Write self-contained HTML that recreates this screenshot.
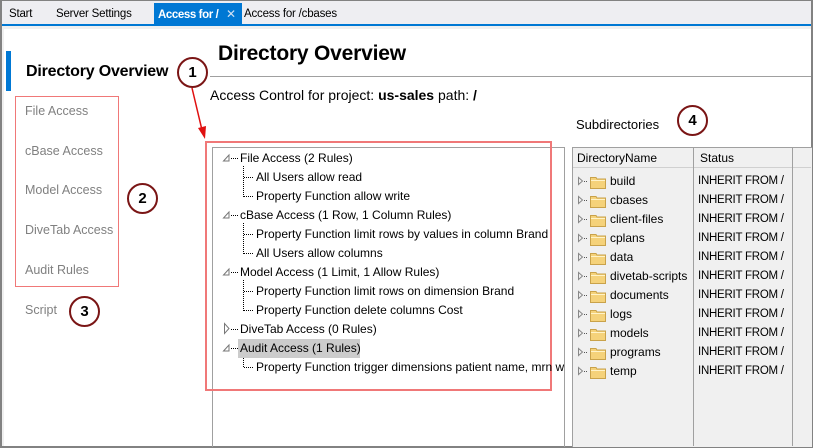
<!DOCTYPE html>
<html><head><meta charset="utf-8"><style>
*{margin:0;padding:0;box-sizing:border-box}
body{width:813px;height:448px;overflow:hidden;background:#fff;font-family:"Liberation Sans",sans-serif;position:relative}
.a{position:absolute;white-space:nowrap}
.tab{top:8px;font-size:11.5px;color:#000;letter-spacing:-0.2px}
.nav{font-size:12.5px;color:#808080;left:25px}
.t{font-size:12px;color:#000;line-height:19px;height:19px}
.c{position:absolute;border:2px solid #7a1515;border-radius:50%;background:#fff;font-weight:bold;font-size:15px;text-align:center;color:#000}
.dr{font-size:12px;line-height:19px}
.st{font-size:11.5px;letter-spacing:-0.25px}
</style></head><body>
<div class="a" style="left:0;top:0;width:813px;height:448px;border:2px solid #828282;border-top-width:1px"></div>
<div class="a" style="left:2px;top:1px;width:809px;height:23px;background:#eeeef2"></div>
<div class="a" style="left:2px;top:24px;width:809px;height:2px;background:#0078d4"></div>
<div class="a" style="left:2px;top:26px;width:809px;height:3px;background:#f0f0f0"></div>
<div class="a" style="left:2px;top:26px;width:2px;height:420px;background:#f0f0f0"></div>
<div class="a tab" style="left:9px">Start</div>
<div class="a tab" style="left:56px">Server Settings</div>
<div class="a" style="left:154px;top:3px;width:88px;height:21px;background:#0078d4"></div>
<div class="a tab" style="left:158px;top:9px;color:#fff;font-weight:bold;letter-spacing:-0.4px">Access for /</div>
<div class="a tab" style="left:226px;color:#cfe0f3;font-size:12px;top:7px">✕</div>
<div class="a tab" style="left:244px">Access for /cbases</div>

<div class="a" style="left:6px;top:51px;width:5px;height:40px;background:#0078d4"></div>
<div class="a" style="left:26px;top:63px;font-size:16px;font-weight:bold;letter-spacing:-0.2px">Directory Overview</div>
<div class="a nav" style="top:104px">File Access</div>
<div class="a nav" style="top:144px">cBase Access</div>
<div class="a nav" style="top:183px">Model Access</div>
<div class="a nav" style="top:223px">DiveTab Access</div>
<div class="a nav" style="top:263px">Audit Rules</div>
<div class="a nav" style="top:303px">Script</div>
<div class="a" style="left:15px;top:96px;width:104px;height:191px;border:1.5px solid #f07878"></div>

<div class="a" style="left:218px;top:42px;font-size:21px;font-weight:bold;letter-spacing:-0.2px">Directory Overview</div>
<div class="a" style="left:210px;top:76px;width:601px;height:1px;background:#a0a0a0"></div>
<div class="a" style="left:210px;top:87px;font-size:14px">Access Control for project: <b>us-sales</b> path: <b>/</b></div>

<div class="a" style="left:212px;top:147px;width:353px;height:300px;border:1px solid #a0a0a0;border-bottom:none"></div>
<div class="a" style="left:205px;top:141px;width:347px;height:250px;border:2px solid #f07878"></div>
<svg class="a" style="left:0;top:0" width="813" height="448">
<g fill="none" stroke="#777" stroke-width="1">
<path d="M229 155 L223.5 161 L229 161 Z"/>
<path d="M229 212 L223.5 218 L229 218 Z"/>
<path d="M229 269 L223.5 275 L229 275 Z"/>
<path d="M229 345 L223.5 351 L229 351 Z"/>
<path d="M224.5 323.5 L224.5 333.5 L229 328.5 Z"/>
</g>
<g stroke="#000" stroke-width="1" stroke-dasharray="1 1" fill="none">
<path d="M231 158.5H238 M231 215.5H238 M231 272.5H238 M231 329.5H238 M231 348.5H238"/>
<path d="M243.5 166V197 M244 177.5H253 M244 196.5H253"/>
<path d="M243.5 223V254 M244 234.5H253 M244 253.5H253"/>
<path d="M243.5 280V311 M244 291.5H253 M244 310.5H253"/>
<path d="M243.5 356V368 M244 367.5H253"/>
</g>
<path d="M192 88 L202 130" stroke="#e01010" stroke-width="1.5"/>
<path d="M198 128 L205 139 L206 126 Z" fill="#e01010"/>
</svg>
<div class="a" style="left:238px;top:339px;width:122px;height:19px;background:#cccccc"></div>
<div class="a t" style="left:240px;top:149px">File Access (2 Rules)</div>
<div class="a t" style="left:256px;top:168px">All Users allow read</div>
<div class="a t" style="left:256px;top:187px">Property Function allow write</div>
<div class="a t" style="left:240px;top:206px">cBase Access (1 Row, 1 Column Rules)</div>
<div class="a t" style="left:256px;top:225px">Property Function limit rows by values in column Brand</div>
<div class="a t" style="left:256px;top:244px">All Users allow columns</div>
<div class="a t" style="left:240px;top:263px">Model Access (1 Limit, 1 Allow Rules)</div>
<div class="a t" style="left:256px;top:282px">Property Function limit rows on dimension Brand</div>
<div class="a t" style="left:256px;top:301px">Property Function delete columns Cost</div>
<div class="a t" style="left:240px;top:320px">DiveTab Access (0 Rules)</div>
<div class="a t" style="left:240px;top:339px">Audit Access (1 Rules)</div>
<div class="a t" style="left:256px;top:358px;width:308px;overflow:hidden">Property Function trigger dimensions patient name, mrn w</div>

<div class="a" style="left:576px;top:117px;font-size:13px">Subdirectories</div>
<div class="a" style="left:572px;top:147px;width:240px;height:300px;background:#f0f0f0;border:1px solid #a0a0a0;border-right:none;border-bottom:none"></div>
<div class="a" style="left:573px;top:148px;width:238px;height:20px;background:#f0f0f0;border-bottom:1px solid #d0d0d0"></div>
<div class="a" style="left:693px;top:148px;width:1px;height:298px;background:#a0a0a0"></div>
<div class="a" style="left:792px;top:148px;width:1px;height:298px;background:#a0a0a0"></div>
<div class="a" style="left:577px;top:151px;font-size:12px">DirectoryName</div>
<div class="a" style="left:700px;top:151px;font-size:12px">Status</div>
<div id="rows"></div>

<div class="c" style="left:177px;top:57px;width:31px;height:31px;line-height:27px">1</div>
<div class="c" style="left:127px;top:183px;width:31px;height:31px;line-height:27px">2</div>
<div class="c" style="left:69px;top:296px;width:31px;height:31px;line-height:27px">3</div>
<div class="c" style="left:677px;top:105px;width:31px;height:31px;line-height:27px">4</div>

<script>
var n=["build","cbases","client-files","cplans","data","divetab-scripts","documents","logs","models","programs","temp"],h="";
n.forEach(function(s,i){var y=172+i*19;
h+='<svg class="a" style="left:577px;top:'+(y+3)+'px" width="32" height="14"><path d="M1.5 2.5L1.5 9.5L5.5 6Z" fill="none" stroke="#888"/><path d="M7 6.5H11" stroke="#555" stroke-dasharray="1 1"/><path d="M13.5 2.5H19l1 1.5h8.5v9.5h-15z" fill="#f5d27a" stroke="#c9a24a"/><path d="M14 5.5h14" stroke="#fff3c8"/></svg>';
h+='<div class="a dr" style="left:610px;top:'+y+'px">'+s+'</div><div class="a dr st" style="left:698px;top:'+y+'px">INHERIT FROM /</div>';});
document.getElementById("rows").outerHTML=h;
</script>
</body></html>
